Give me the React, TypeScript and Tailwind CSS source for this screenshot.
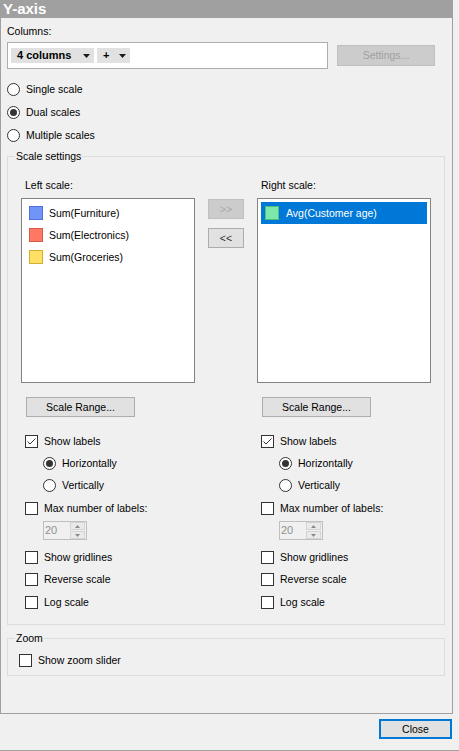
import React from "react";

function Radio({ checked }: { checked?: boolean }) {
  return (
    <span className="w-[13px] h-[13px] shrink-0 rounded-full border border-[#333333] bg-white flex items-center justify-center">
      {checked && <span className="w-[7px] h-[7px] rounded-full bg-[#333333]" />}
    </span>
  );
}

function Check({ checked }: { checked?: boolean }) {
  return (
    <span className="w-[13px] h-[13px] shrink-0 border border-[#333333] bg-white flex items-center justify-center">
      {checked && (
        <svg width="11" height="11" viewBox="0 0 11 11">
          <path d="M1.5 5.5 L4 8 L9.5 2.5" fill="none" stroke="#333333" strokeWidth="1" />
        </svg>
      )}
    </span>
  );
}

function Caret() {
  return (
    <svg width="7" height="4" viewBox="0 0 7 4" className="shrink-0">
      <path d="M0 0 H7 L3.5 4 Z" fill="#1a1a1a" />
    </svg>
  );
}

function Spinner() {
  return (
    <div className="ml-[18px] mt-[2px] w-[44px] h-[19px] border border-[#bfbfbf] bg-[#f0f0f0] flex items-center justify-between">
      <span className="pl-[1px] text-[#8f8f8f] text-[11px]">20</span>
      <div className="w-[15px] h-[17px] flex flex-col gap-[1px] mr-px">
        <div className="h-[8px] border border-[#d4d4d4] bg-[#eaeaea] flex items-center justify-center">
          <svg width="5" height="3" viewBox="0 0 5 3">
            <path d="M0 3 H5 L2.5 0 Z" fill="#8a8a8a" />
          </svg>
        </div>
        <div className="h-[8px] border border-[#d4d4d4] bg-[#eaeaea] flex items-center justify-center">
          <svg width="5" height="3" viewBox="0 0 5 3">
            <path d="M0 0 H5 L2.5 3 Z" fill="#8a8a8a" />
          </svg>
        </div>
      </div>
    </div>
  );
}

function Swatch({ fill, border }: { fill: string; border: string }) {
  return <span className="w-[14px] h-[14px] shrink-0 border" style={{ background: fill, borderColor: border }} />;
}

function ScaleColumn({
  label,
  items,
  selected,
}: {
  label: string;
  items: { name: string; fill: string; border: string }[];
  selected?: boolean;
}) {
  return (
    <div className="w-[174px] flex flex-col">
      <div className="pl-[4px] h-[13px] mb-[6px]">{label}</div>
      <div className="h-[185px] border border-[#828282] bg-white p-[3px] flex flex-col">
        {items.map((it) => (
          <div
            key={it.name}
            className={
              selected
                ? "h-[22px] flex items-center gap-[7px] pl-[4px] bg-[#0078d7] text-white"
                : "h-[22px] flex items-center gap-[6px] pl-[4px]"
            }
          >
            <Swatch fill={it.fill} border={it.border} />
            <span>{it.name}</span>
          </div>
        ))}
      </div>
      <button className="mt-[14px] ml-[5px] w-[109px] h-[20px] border border-[#adadad] bg-[#e1e1e1] flex items-center justify-center">
        Scale Range...
      </button>
      <div className="mt-[13px] pl-[4px] flex flex-col">
        <div className="h-[22px] flex items-center gap-[6px]">
          <Check checked />
          <span>Show labels</span>
        </div>
        <div className="h-[22px] flex items-center gap-[6px] pl-[18px]">
          <Radio checked />
          <span>Horizontally</span>
        </div>
        <div className="h-[23px] flex items-center gap-[6px] pl-[18px]">
          <Radio />
          <span>Vertically</span>
        </div>
        <div className="h-[22px] flex items-center gap-[6px]">
          <Check />
          <span>Max number of labels:</span>
        </div>
        <Spinner />
        <div className="mt-[6px] h-[22px] flex items-center gap-[6px]">
          <Check />
          <span>Show gridlines</span>
        </div>
        <div className="h-[23px] flex items-center gap-[6px]">
          <Check />
          <span>Reverse scale</span>
        </div>
        <div className="h-[23px] flex items-center gap-[6px]">
          <Check />
          <span>Log scale</span>
        </div>
      </div>
    </div>
  );
}

export default function App() {
  return (
    <div className="w-[459px] h-[751px] bg-[#f0f0f0] flex flex-col overflow-hidden text-[10.5px] leading-[13px] text-black font-['Liberation_Sans',Arial,sans-serif]">
      <div className="w-[453px] h-[714px] shrink-0 border-x border-b border-[#a0a0a0] flex flex-col">
        <div className="h-[18px] shrink-0 bg-[#a0a0a0] pl-[2px] text-[15px] leading-[18px] font-bold text-white">
          Y-axis
        </div>
        <div className="pl-[6px] flex flex-col">
          <div className="mt-[7px] h-[13px]">Columns:</div>
          <div className="mt-[4px] flex items-start">
            <div className="w-[321px] h-[27px] border border-[#adadad] bg-white flex items-start gap-[3px] pl-[3px] pt-[5px]">
              <div className="w-[83px] h-[15px] bg-[#e1e1e1] flex items-center justify-between pl-[6px] pr-[4px] text-[11px] font-bold">
                <span>4 columns</span>
                <Caret />
              </div>
              <div className="w-[33px] h-[15px] bg-[#e1e1e1] flex items-center justify-between pl-[6px] pr-[4px] text-[11px] font-bold">
                <span>+</span>
                <Caret />
              </div>
            </div>
            <button className="ml-[9px] mt-[3px] w-[98px] h-[21px] border border-[#bfbfbf] bg-[#cccccc] text-[#a0a0a0] flex items-center justify-center">
              Settings...
            </button>
          </div>
          <div className="mt-[9px] flex flex-col">
            <div className="h-[23px] flex items-center gap-[6px]">
              <Radio />
              <span>Single scale</span>
            </div>
            <div className="h-[23px] flex items-center gap-[6px]">
              <Radio checked />
              <span>Dual scales</span>
            </div>
            <div className="h-[23px] flex items-center gap-[6px]">
              <Radio />
              <span>Multiple scales</span>
            </div>
          </div>
          <div className="mt-[9px] w-[438px] h-[469px] border border-[#dcdcdc] relative">
            <span className="absolute left-[7px] -top-[7px] px-[1px] bg-[#f0f0f0] leading-[13px]">Scale settings</span>
            <div className="pt-[22px] pl-[13px] flex">
              <ScaleColumn
                label="Left scale:"
                items={[
                  { name: "Sum(Furniture)", fill: "#7195f6", border: "#4f72d8" },
                  { name: "Sum(Electronics)", fill: "#ff7864", border: "#d65a48" },
                  { name: "Sum(Groceries)", fill: "#ffe066", border: "#d2ae2e" },
                ]}
              />
              <div className="ml-[13px] w-[36px] pt-[20px] flex flex-col gap-[9px]">
                <button className="h-[20px] border border-[#bfbfbf] bg-[#cccccc] text-[#a8a8a8] flex items-center justify-center">
                  &gt;&gt;
                </button>
                <button className="h-[20px] border border-[#adadad] bg-[#e1e1e1] text-[#333333] flex items-center justify-center">
                  &lt;&lt;
                </button>
              </div>
              <div className="ml-[13px]">
                <ScaleColumn
                  label="Right scale:"
                  selected
                  items={[{ name: "Avg(Customer age)", fill: "#7be8aa", border: "#4fbf80" }]}
                />
              </div>
            </div>
          </div>
          <div className="mt-[13px] w-[438px] h-[38px] border border-[#dcdcdc] relative">
            <span className="absolute left-[7px] -top-[7px] px-[1px] bg-[#f0f0f0] leading-[13px]">Zoom</span>
            <div className="pt-[10px] pl-[11px]">
              <div className="h-[22px] flex items-center gap-[6px]">
                <Check />
                <span>Show zoom slider</span>
              </div>
            </div>
          </div>
        </div>
      </div>
      <button className="mt-[5px] mr-[7px] self-end w-[73px] h-[20px] border-2 border-[#0078d7] bg-[#e1e1e1] flex items-center justify-center">
        Close
      </button>
      <div className="mt-auto h-px bg-[#a0a0a0]" />
    </div>
  );
}
